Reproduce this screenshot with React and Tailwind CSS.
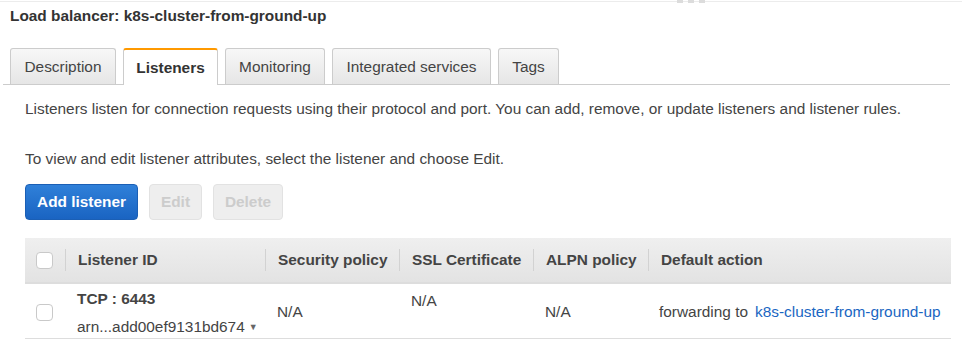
import { useState } from "react";

const tabs = [
  { label: "Description", w: "w-[106px]" },
  { label: "Listeners", w: "w-[95px]" },
  { label: "Monitoring", w: "w-[100px]" },
  { label: "Integrated services", w: "w-[159px]" },
  { label: "Tags", w: "w-[61px]" },
];

const columns = ["Listener ID", "Security policy", "SSL Certificate", "ALPN policy", "Default action"];

function Checkbox() {
  return <div className="w-[17px] h-[17px] rounded-[4px] border border-[#c9c9c9] bg-white" />;
}

export default function App() {
  const [active, setActive] = useState("Listeners");

  return (
    <div className="w-[962px] h-[342px] overflow-hidden bg-white text-[15.4px] text-[#444] font-['Liberation_Sans',Arial,sans-serif] relative">
      {/* resize handle strip */}
      <div className="h-[2px] border-b border-[#ececec]" />
      <div className="absolute top-0 left-[677px] flex gap-[5px]">
        <span className="w-[6px] h-[3px] bg-[#dcdcdc]" />
        <span className="w-[6px] h-[3px] bg-[#dcdcdc]" />
        <span className="w-[6px] h-[3px] bg-[#dcdcdc]" />
      </div>

      <div className="pl-[10px] pt-[5px] h-[18px] leading-[18px] font-bold text-[#333]">
        Load balancer: k8s-cluster-from-ground-up
      </div>

      {/* Tabs */}
      <div className="mt-[28px] ml-[3px] w-[947px] h-[37px] flex items-end gap-[7px] pl-[7px] border-b border-[#cccccc]">
        {tabs.map((t) => {
          const on = t.label === active;
          return (
            <button
              key={t.label}
              onClick={() => setActive(t.label)}
              className={`${t.w} flex items-center justify-center rounded-t-[3px] border border-b-0 -mb-px ${
                on
                  ? "h-[37px] bg-white border-[#cccccc] border-t-[2px] border-t-[#ff9900] font-bold text-[#333]"
                  : "h-[36px] bg-gradient-to-b from-[#f7f7f7] to-[#e6e6e6] border-[#cccccc] text-[#444] mb-0"
              }`}
            >
              {t.label}
            </button>
          );
        })}
      </div>

      <div className="pl-[25px]">
        <p className="mt-[15px] h-[18px] leading-[18px]">
          Listeners listen for connection requests using their protocol and port. You can add, remove, or update listeners and listener rules.
        </p>
        <p className="mt-[32px] h-[18px] leading-[18px]">
          To view and edit listener attributes, select the listener and choose Edit.
        </p>

        <div className="mt-[16px] flex gap-[11px]">
          <button className="w-[113px] h-[36px] rounded-[4px] border border-[#1b5fb5] bg-gradient-to-b from-[#2f80d9] to-[#1a64c2] text-white font-bold">
            Add listener
          </button>
          <button className="w-[53px] h-[36px] rounded-[4px] border border-[#e2e2e2] bg-[#eeeeee] text-[#cccccc] font-bold">
            Edit
          </button>
          <button className="w-[70px] h-[36px] rounded-[4px] border border-[#e2e2e2] bg-[#eeeeee] text-[#cccccc] font-bold">
            Delete
          </button>
        </div>

        {/* Table */}
        <div className="mt-[18px] w-[926px]">
          <div className="grid grid-cols-[40px_200px_134px_134px_115px_1fr] h-[46px] bg-gradient-to-b from-[#efefef] to-[#e3e3e3] border-b-2 border-[#dddddd] font-bold text-[#444]">
            <div className="flex items-center pl-[11px]">
              <Checkbox />
            </div>
            {columns.map((c) => (
              <div key={c} className="flex items-center">
                <div className="h-[22px] border-l border-[#d2d2d2] pl-[12px] flex items-center">{c}</div>
              </div>
            ))}
          </div>

          <div className="grid grid-cols-[40px_200px_134px_134px_115px_1fr] h-[55px] border-b border-[#dddddd]">
            <div className="flex items-center pl-[11px] pt-[3px]">
              <Checkbox />
            </div>
            <div className="pl-[12px] pt-[6px]">
              <div className="font-bold leading-[18px]">TCP : 6443</div>
              <div className="mt-[10px] leading-[18px] flex items-center">
                arn...add00ef9131bd674
                <span className="ml-[4px] text-[9px] text-[#666]">▼</span>
              </div>
            </div>
            <div className="flex items-center pl-[12px] pt-[1px]">N/A</div>
            <div className="pl-[12px] pt-[8px] leading-[18px]">N/A</div>
            <div className="flex items-center pl-[12px] pt-[1px]">N/A</div>
            <div className="flex items-center pl-[11px] pt-[1px]">
              forwarding to
              <a href="#" className="ml-[7px] text-[#1a66c2]">k8s-cluster-from-ground-up</a>
            </div>
          </div>
        </div>
      </div>
    </div>
  );
}
